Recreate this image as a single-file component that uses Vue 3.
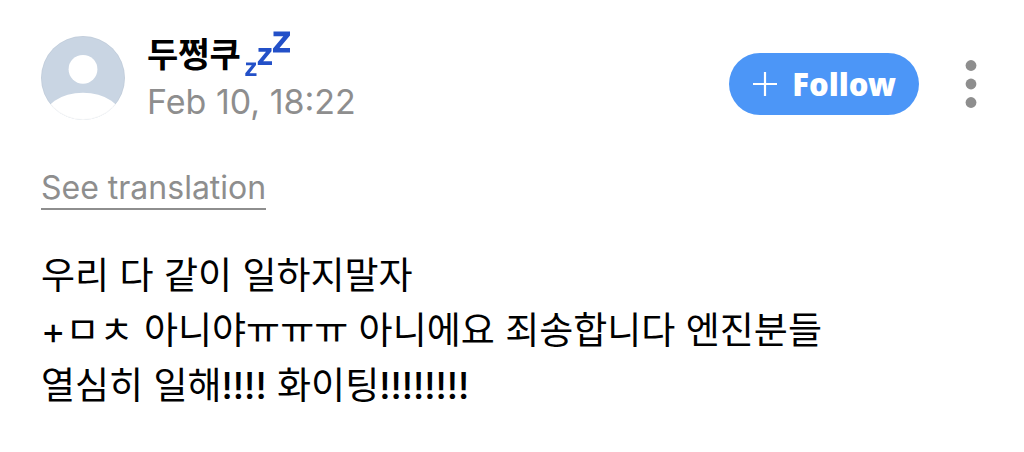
<script setup>
const lines = [
  ['우리 다 같이 일하지말자'],
  ['+ㅁㅊ 아니야ㅠㅠㅠ 아니에요 죄송합니다 엔진분들'],
  ['열심히 일해', '!!!!', ' 화이팅', '!!!!!!!!'],
]
const isShout = (part) => part.startsWith('!')
</script>

<template>
  <article class="post">
    <header class="head">
      <svg class="avatar" viewBox="0 0 84 84" aria-hidden="true">
        <defs>
          <clipPath id="round"><circle cx="42" cy="42" r="42" /></clipPath>
        </defs>
        <g clip-path="url(#round)">
          <rect width="84" height="84" fill="#c9d5e3" />
          <circle cx="42" cy="33.300" r="14.400" fill="#fff" />
          <ellipse cx="42" cy="84" rx="40" ry="27.300" fill="#fff" />
        </g>
        <circle cx="42" cy="42" r="41.500" fill="none" stroke="#000" stroke-opacity=".03" />
      </svg>
      <div class="who">
        <div class="name">
          <span>두쩡쿠</span>
          <svg class="zzz" viewBox="0 0 46 48" fill="#2350c8" aria-hidden="true">
            <path d="M1 32.500H11V35L4.500 43.300H11.500V46H.300V43.300L6.800 35.200H1Z" />
            <path d="M13.500 18H26.500V21.300L18.200 31.200H27V35H12.800V31.700L21 21.800H13.500Z" />
            <path d="M28.500 1.500H45V5.500L34.500 18H45V22.500H28V18.500L38.300 6.200H28.500Z" />
          </svg>
        </div>
        <time class="date">Feb 10, 18:22</time>
      </div>
      <div class="actions">
        <button class="follow" type="button">
          <svg class="plus" viewBox="0 0 26 26" aria-hidden="true">
            <path d="M13 1V25M1 13H25" stroke="#fff" stroke-width="2.200" />
          </svg>
          Follow
        </button>
        <button class="more" type="button" aria-label="More options">
          <svg viewBox="0 0 12 48" aria-hidden="true" fill="#8e8e8e">
            <circle cx="6" cy="5.500" r="5.400" />
            <circle cx="6" cy="24" r="5.400" />
            <circle cx="6" cy="42.500" r="5.400" />
          </svg>
        </button>
      </div>
    </header>
    <a class="translate" href="#">See translation</a>
    <p class="body">
      <span v-for="(parts, i) in lines" :key="i" class="line"><span
        v-for="(part, j) in parts" :key="j" :class="{ shout: isShout(part) }">{{ part }}</span></span>
    </p>
  </article>
</template>

<style>
body { background: #fff; }
</style>

<style scoped>
.post {
  padding: 30px 41px;
  font-family: Inter, "Noto Sans CJK KR", sans-serif;
  color: #000;
}
.head { display: flex; align-items: center; }
.avatar { width: 84px; height: 84px; margin-right: 22px; flex: none; }
.who { flex: 1; }
.name { display: flex; height: 48px; font: bold 34px/46px "Noto Sans CJK KR", sans-serif; }
.zzz { width: 46px; height: 48px; margin-left: 4px; }
.date { display: block; font-size: 34px; line-height: 48px; color: #8e8e8e; }
.actions { display: flex; align-items: center; padding-top: 12px; }
.follow {
  display: flex; align-items: center; gap: 14px;
  height: 62px; padding: 0 23px; border: 0; border-radius: 31px;
  background: #4c96f7; color: #fff;
  font: 900 31px/60px "Noto Sans", sans-serif;
}
.plus { width: 26px; height: 26px; }
.more { width: 12px; height: 48px; margin: 0 6px 0 46px; padding: 0; border: 0; background: none; }
.more svg { display: block; width: 12px; height: 48px; }
.translate {
  display: inline-block; margin-top: 42px; color: #8e8e8e;
  font-size: 32px; line-height: 40px; text-decoration: none; border-bottom: 2px solid #8e8e8e;
}
.body { margin: 38px 0 0; font-size: 37px; line-height: 55px; }
.line { display: block; white-space: pre-wrap; }
.shout { font-weight: 500; }
</style>
